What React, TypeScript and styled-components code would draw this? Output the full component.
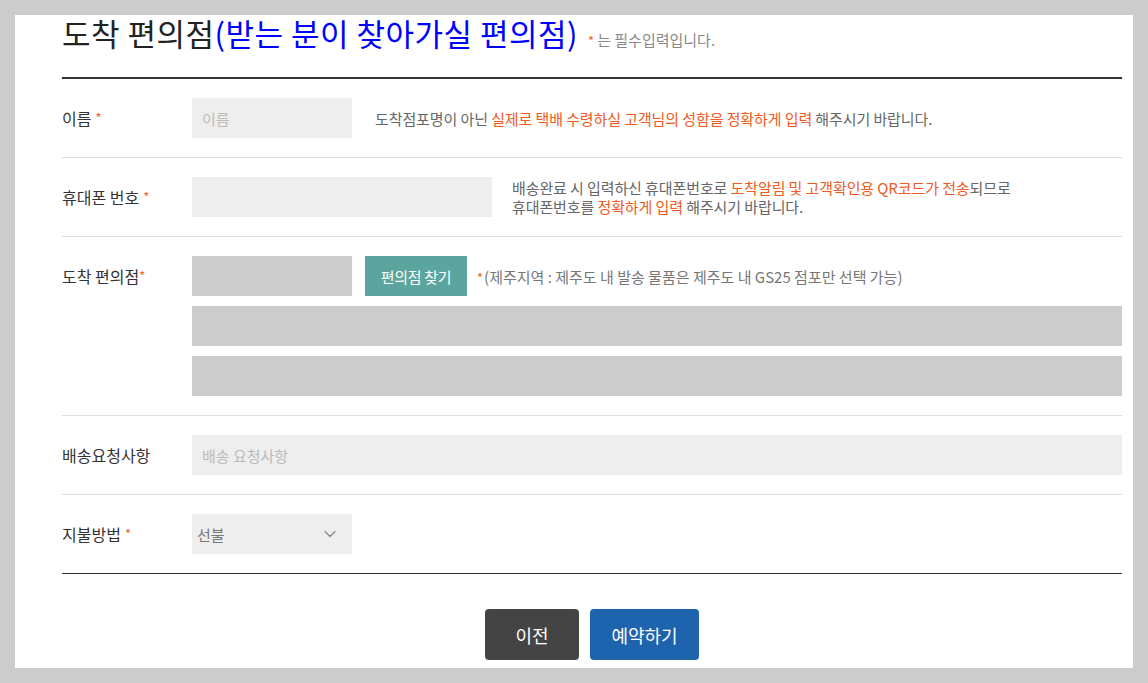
import React from 'react';
import styled, { createGlobalStyle } from 'styled-components';
import { ChevronDown } from 'lucide-react';

const GlobalStyle = createGlobalStyle`
  html, body {
    margin: 0;
    padding: 0;
    background: #cccccc;
    font-family: "Noto Sans CJK KR", "Noto Sans", sans-serif;
    color: #333;
  }
`;

const Page = styled.div`
  padding: 15px 15px 0;
  height: 683px;
  box-sizing: border-box;
  overflow: hidden;
`;

const Panel = styled.div`
  background: #fff;
  height: 653px;
  padding: 0 11px 0 47px;
  box-sizing: border-box;
`;

const Header = styled.div`
  height: 64px;
  display: flex;
  align-items: baseline;
  border-bottom: 2px solid #333;
  box-sizing: border-box;
`;

const Title = styled.h2`
  margin: 0;
  font-size: 31px;
  line-height: 35px;
  font-weight: 400;
  letter-spacing: 0.5px;
  color: #222;
  span {
    color: #0000ff;
  }
`;

const Req = styled.span`
  color: #f26522;
  font-size: 13px;
  margin: 0 3px 0 0;
`;

const RequiredNote = styled.p`
  margin: 0 0 0 10px;
  font-size: 15px;
  color: #888;
`;

const Row = styled.div<{ $last?: boolean }>`
  display: flex;
  align-items: flex-start;
  padding: 19px 0;
  border-bottom: 1px solid ${(p) => (p.$last ? '#333' : '#ddd')};
`;

const Label = styled.label`
  width: 130px;
  flex-shrink: 0;
  height: 39px;
  display: flex;
  align-items: center;
  font-size: 16px;
  color: #333;
  ${Req} {
    margin: 0 0 0 4px;
  }
`;

const Field = styled.div`
  flex: 1;
  display: flex;
  flex-direction: column;
  gap: 10px;
`;

const Line = styled.div`
  display: flex;
  align-items: center;
`;

const Input = styled.input<{ $w?: string; $dark?: boolean }>`
  width: ${(p) => p.$w || '100%'};
  height: 40px;
  box-sizing: border-box;
  border: none;
  outline: none;
  background: ${(p) => (p.$dark ? '#cccccc' : '#eeeeee')};
  padding: 0 10px;
  font-family: inherit;
  font-size: 15px;
  color: #333;
  flex-shrink: 0;
  &::placeholder {
    color: #bbb;
  }
`;

const Help = styled.p<{ $gap: number }>`
  margin: 0 0 0 ${(p) => p.$gap}px;
  font-size: 15px;
  line-height: 19px;
  color: #666;
  letter-spacing: -0.1px;
  em {
    font-style: normal;
    color: #f15a22;
  }
`;

const Note = styled.p`
  margin: 0 0 0 10px;
  font-size: 15px;
  color: #777;
  ${Req} {
    margin: 0 1px 0 0;
  }
`;

const FindButton = styled.button`
  margin-left: 13px;
  width: 102px;
  height: 40px;
  border: none;
  background: #5ba59e;
  color: #fff;
  font-family: inherit;
  font-size: 15px;
  letter-spacing: -0.3px;
`;

const SelectBox = styled.div`
  width: 160px;
  height: 40px;
  background: #eee;
  display: flex;
  align-items: center;
  justify-content: space-between;
  padding: 0 12px 0 5px;
  box-sizing: border-box;
  font-size: 15px;
  color: #777;
`;

const Actions = styled.div`
  display: flex;
  justify-content: center;
  gap: 11px;
  margin-top: 35px;
`;

const ActionButton = styled.button<{ $primary?: boolean }>`
  height: 51px;
  width: ${(p) => (p.$primary ? 109 : 94)}px;
  padding: 0;
  border: none;
  border-radius: 4px;
  background: ${(p) => (p.$primary ? '#1e63ae' : '#444444')};
  color: #fff;
  font-family: inherit;
  font-size: 18px;
`;

export default function App() {
  return (
    <>
      <GlobalStyle />
      <Page>
        <Panel>
          <Header>
            <Title>
              도착 편의점<span>(받는 분이 찾아가실 편의점)</span>
            </Title>
            <RequiredNote>
              <Req>*</Req>는 필수입력입니다.
            </RequiredNote>
          </Header>

          <Row>
            <Label>
              이름<Req>*</Req>
            </Label>
            <Field>
              <Line>
                <Input $w="160px" placeholder="이름" />
                <Help $gap={23}>
                  도착점포명이 아닌 <em>실제로 택배 수령하실 고객님의 성함을 정확하게 입력</em> 해주시기 바랍니다.
                </Help>
              </Line>
            </Field>
          </Row>

          <Row>
            <Label>
              휴대폰 번호<Req>*</Req>
            </Label>
            <Field>
              <Line>
                <Input $w="300px" />
                <Help $gap={20}>
                  배송완료 시 입력하신 휴대폰번호로 <em>도착알림 및 고객확인용 QR코드가 전송</em>되므로
                  <br />
                  휴대폰번호를 <em>정확하게 입력</em> 해주시기 바랍니다.
                </Help>
              </Line>
            </Field>
          </Row>

          <Row>
            <Label>
              도착 편의점<Req style={{ margin: 0 }}>*</Req>
            </Label>
            <Field>
              <Line>
                <Input $w="160px" $dark readOnly />
                <FindButton>편의점 찾기</FindButton>
                <Note>
                  <Req>*</Req>(제주지역 : 제주도 내 발송 물품은 제주도 내 GS25 점포만 선택 가능)
                </Note>
              </Line>
              <Input $dark readOnly />
              <Input $dark readOnly />
            </Field>
          </Row>

          <Row>
            <Label>배송요청사항</Label>
            <Field>
              <Input placeholder="배송 요청사항" />
            </Field>
          </Row>

          <Row $last>
            <Label>
              지불방법<Req>*</Req>
            </Label>
            <Field>
              <SelectBox>
                선불
                <ChevronDown size={20} strokeWidth={1.5} color="#888" />
              </SelectBox>
            </Field>
          </Row>

          <Actions>
            <ActionButton>이전</ActionButton>
            <ActionButton $primary>예약하기</ActionButton>
          </Actions>
        </Panel>
      </Page>
    </>
  );
}
